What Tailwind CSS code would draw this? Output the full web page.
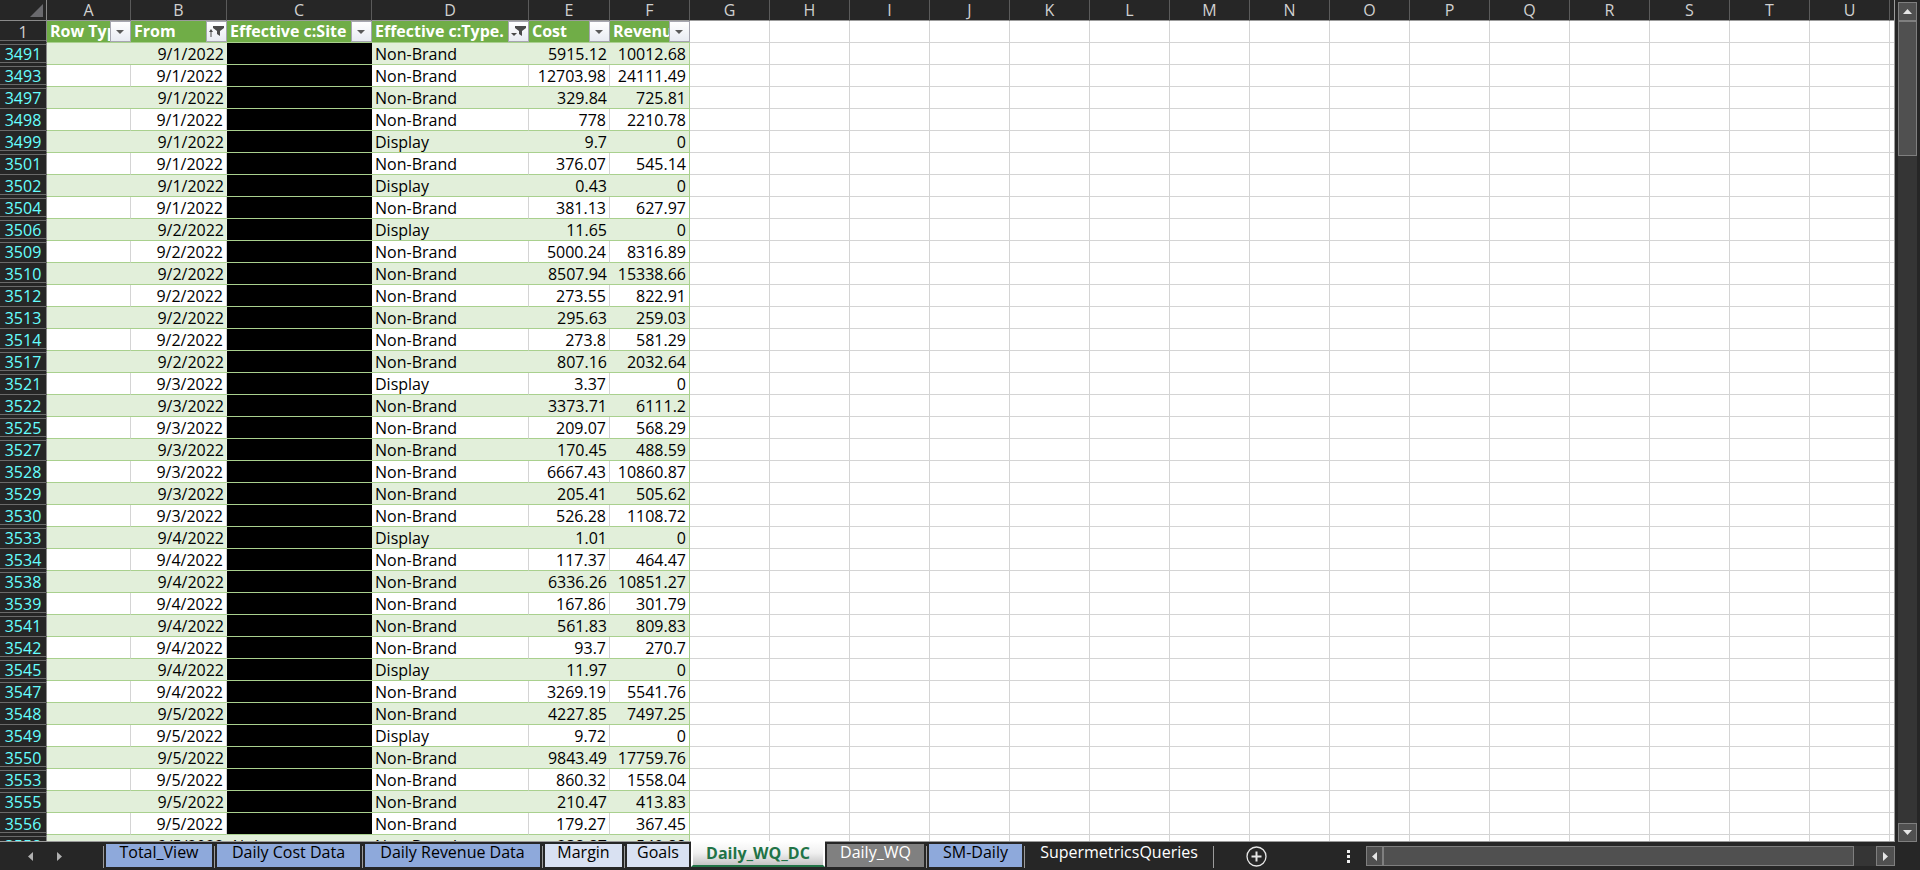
<!DOCTYPE html>
<html lang="en">
<head>
    <meta charset="UTF-8">
    <meta name="viewport" content="width=device-width, initial-scale=1.0">
    <title>Daily_WQ_DC</title>
    <script src="https://cdn.jsdelivr.net/npm/@tailwindcss/browser@4"></script>
</head>
<body class="h-screen flex flex-col overflow-hidden bg-[#262626] font-['Century_Gothic','Open_Sans',sans-serif] text-base">

    <!-- Sheet and vertical scrollbar -->
    <main class="flex-1 min-h-0 flex">
        <div class="flex-1 min-w-0 overflow-hidden bg-white border-r border-b border-[#9b9b9b]">
            <table class="w-full table-fixed border-separate border-spacing-0 leading-5">
                <colgroup id="cols">
                    <col class="w-[47px]">
                    <col class="w-[84px]">
                    <col class="w-24">
                    <col class="w-[145px]">
                    <col class="w-[157px]">
                    <col class="w-[81px]">
                    <col class="w-20">
                </colgroup>
                <thead>
                    <tr id="letters" class="h-[21px] bg-[#262626] text-[#d0d0d0]">
                        <th class="p-0 border-r border-b border-[#8a8a8a]" aria-label="Select all">
                            <svg class="ml-auto mr-[3px] size-[13px]" viewBox="0 0 13 13"><path d="M13 0V13H0Z" fill="#6a6a6e"/></svg>
                        </th>
                    </tr>
                </thead>
                <tbody id="rows"></tbody>
            </table>
        </div>

        <div class="w-[25px] flex flex-col pl-[3px] pr-[3px] pt-[2px]">
            <button aria-label="Scroll up" class="h-[19px] shrink-0 flex items-center justify-center bg-[#505050] border border-[#7f7f7f]">
                <svg class="w-[9px] h-[5px]" viewBox="0 0 9 5"><path d="M4.500 0L9 5H0Z" fill="#e6e6e6"/></svg>
            </button>
            <div class="flex-1 bg-[#353535]">
                <div class="h-[135px] bg-[#505050] border border-[#7f7f7f]"></div>
            </div>
            <button aria-label="Scroll down" class="h-[19px] shrink-0 flex items-center justify-center bg-[#505050] border border-[#7f7f7f]">
                <svg class="w-[9px] h-[5px]" viewBox="0 0 9 5"><path d="M0 0H9L4.500 5Z" fill="#e6e6e6"/></svg>
            </button>
        </div>
    </main>

    <!-- Sheet tabs -->
    <footer class="h-7 shrink-0 flex items-start font-['Segoe_UI','Open_Sans',sans-serif] leading-4">
        <div class="w-[103px] shrink-0 h-7 flex items-center pl-7 gap-6">
            <button aria-label="Previous sheet" class="h-[9px]"><svg class="w-[5px] h-[9px]" viewBox="0 0 5 9"><path d="M5 0V9L0 4.500Z" fill="#b0b0b0"/></svg></button>
            <button aria-label="Next sheet" class="h-[9px]"><svg class="w-[5px] h-[9px]" viewBox="0 0 5 9"><path d="M0 0V9L5 4.500Z" fill="#b0b0b0"/></svg></button>
        </div>
        <nav id="tabs" class="flex shrink-0 whitespace-nowrap">
            <div class="border-l border-[#9b9b9b] mt-1 h-[22px] pl-[2px]"><button class="-mt-[2px] block w-[106px] h-[23px] bg-[#8ea9db] text-black pb-[7px]">Total_View</button></div>
            <div class="border-l border-[#9b9b9b] mt-1 ml-[2px] h-[22px] pl-[2px]"><button class="-mt-[2px] block w-[143px] h-[23px] bg-[#8ea9db] text-black pb-[7px]">Daily Cost Data</button></div>
            <div class="border-l border-[#9b9b9b] mt-1 ml-[2px] h-[22px] pl-[2px]"><button class="-mt-[2px] block w-[175px] h-[23px] bg-[#8ea9db] text-black pb-[7px]">Daily Revenue Data</button></div>
            <div class="border-l border-[#9b9b9b] mt-1 ml-[2px] h-[22px] pl-[2px]"><button class="-mt-[2px] block w-[77px] h-[23px] bg-[#d9e1f2] text-black pb-[7px]">Margin</button></div>
            <div class="border-l border-[#9b9b9b] mt-1 ml-[2px] h-[22px] pl-[2px]"><button class="-mt-[2px] block w-[62px] h-[23px] bg-[#d9e1f2] text-black pb-[7px]">Goals</button></div>
            <button aria-current="page" class="-mt-px ml-[2px] w-[134px] h-[26px] px-[2px] bg-linear-to-b from-white via-[#f0f0f0] to-[#c4c4c4] border-x-2 border-white border-b-2 border-b-[#217346] font-bold text-[#217346]">Daily_WQ_DC</button>
            <div class="ml-[2px] mt-[2px]"><button class="block w-[97px] h-[23px] bg-[#808080] text-white pb-[7px]">Daily_WQ</button></div>
            <div class="border-l border-[#9b9b9b] mt-1 ml-[2px] h-[22px] pl-[2px]"><button class="-mt-[2px] block w-[93px] h-[23px] bg-[#8ea9db] text-black pb-[7px]">SM-Daily</button></div>
            <div class="border-x border-[#9b9b9b] mt-1 ml-[2px] h-[22px]"><button class="-mt-[2px] block w-[188px] h-[23px] text-white pb-[7px]">SupermetricsQueries</button></div>
        </nav>
        <button aria-label="New sheet" class="ml-8 mt-1 shrink-0">
            <svg class="size-[21px]" viewBox="0 0 21 21" fill="none" stroke="#e6e6e6"><circle cx="10.500" cy="10.500" r="9.500" stroke-width="1.300"/><path d="M10.500 5.500V15.500M5.500 10.500H15.500" stroke-width="2"/></svg>
        </button>
        <div class="flex-1"></div>
        <svg class="w-[3px] h-[13px] mt-2 mr-4 shrink-0" viewBox="0 0 3 13" fill="#f0f0f0"><path d="M0 0H3V3H0ZM0 5H3V8H0ZM0 10H3V13H0Z"/></svg>
        <div class="w-[529px] mr-[25px] mt-1 h-5 flex bg-[#353535]">
            <button aria-label="Scroll left" class="w-[17px] flex items-center justify-center bg-[#505050] border border-[#7f7f7f]">
                <svg class="w-[5px] h-[9px]" viewBox="0 0 5 9"><path d="M5 0V9L0 4.500Z" fill="#e6e6e6"/></svg>
            </button>
            <div class="flex-1 pr-[22px]"><div class="h-full bg-[#505050] border border-[#7f7f7f]"></div></div>
            <button aria-label="Scroll right" class="w-[19px] flex items-center justify-center bg-[#505050] border border-[#7f7f7f]">
                <svg class="w-[5px] h-[9px]" viewBox="0 0 5 9"><path d="M0 0V9L5 4.500Z" fill="#e6e6e6"/></svg>
            </button>
        </div>
    </footer>

    <script>
        // row number, date, type, cost, revenue
        const data = [
            [3491, '9/1/2022', 'Non-Brand', '5915.12', '10012.68'],
            [3493, '9/1/2022', 'Non-Brand', '12703.98', '24111.49'],
            [3497, '9/1/2022', 'Non-Brand', '329.84', '725.81'],
            [3498, '9/1/2022', 'Non-Brand', '778', '2210.78'],
            [3499, '9/1/2022', 'Display', '9.7', '0'],
            [3501, '9/1/2022', 'Non-Brand', '376.07', '545.14'],
            [3502, '9/1/2022', 'Display', '0.43', '0'],
            [3504, '9/1/2022', 'Non-Brand', '381.13', '627.97'],
            [3506, '9/2/2022', 'Display', '11.65', '0'],
            [3509, '9/2/2022', 'Non-Brand', '5000.24', '8316.89'],
            [3510, '9/2/2022', 'Non-Brand', '8507.94', '15338.66'],
            [3512, '9/2/2022', 'Non-Brand', '273.55', '822.91'],
            [3513, '9/2/2022', 'Non-Brand', '295.63', '259.03'],
            [3514, '9/2/2022', 'Non-Brand', '273.8', '581.29'],
            [3517, '9/2/2022', 'Non-Brand', '807.16', '2032.64'],
            [3521, '9/3/2022', 'Display', '3.37', '0'],
            [3522, '9/3/2022', 'Non-Brand', '3373.71', '6111.2'],
            [3525, '9/3/2022', 'Non-Brand', '209.07', '568.29'],
            [3527, '9/3/2022', 'Non-Brand', '170.45', '488.59'],
            [3528, '9/3/2022', 'Non-Brand', '6667.43', '10860.87'],
            [3529, '9/3/2022', 'Non-Brand', '205.41', '505.62'],
            [3530, '9/3/2022', 'Non-Brand', '526.28', '1108.72'],
            [3533, '9/4/2022', 'Display', '1.01', '0'],
            [3534, '9/4/2022', 'Non-Brand', '117.37', '464.47'],
            [3538, '9/4/2022', 'Non-Brand', '6336.26', '10851.27'],
            [3539, '9/4/2022', 'Non-Brand', '167.86', '301.79'],
            [3541, '9/4/2022', 'Non-Brand', '561.83', '809.83'],
            [3542, '9/4/2022', 'Non-Brand', '93.7', '270.7'],
            [3545, '9/4/2022', 'Display', '11.97', '0'],
            [3547, '9/4/2022', 'Non-Brand', '3269.19', '5541.76'],
            [3548, '9/5/2022', 'Non-Brand', '4227.85', '7497.25'],
            [3549, '9/5/2022', 'Display', '9.72', '0'],
            [3550, '9/5/2022', 'Non-Brand', '9843.49', '17759.76'],
            [3553, '9/5/2022', 'Non-Brand', '860.32', '1558.04'],
            [3555, '9/5/2022', 'Non-Brand', '210.47', '413.83'],
            [3556, '9/5/2022', 'Non-Brand', '179.27', '367.45'],
            [3558, '9/5/2022', 'Non-Brand', '238.87', '540.88', 'Alpha']
        ];
        const letters = 'ABCDEFGHIJKLMNOPQRSTU'.split('');

        // Filter button icons
        const icons = {
            arrow: '<svg class="size-[17px]" viewBox="0 0 17 17"><path d="M4 7H12L8 11Z" fill="#5a5a5a"/></svg>',
            sorted: '<svg class="size-[19px] shrink-0" viewBox="0 0 19 19" fill="#4a4a4a"><path d="M6 4H17V6L13 9V14L10 12V9L6 6Z"/><path d="M4 7L6 10H4.500V15H3.500V10H2Z"/></svg>',
            filtered: '<svg class="size-[19px] shrink-0" viewBox="0 0 19 19" fill="#4a4a4a"><path d="M6 4H17V6L13 9V14L10 12V9L6 6Z"/><path d="M2 11H8L5 14Z"/></svg>'
        };
        const headers = [
            ['Row Type', 'arrow'],
            ['From', 'sorted'],
            ['Effective c:Site', 'arrow'],
            ['Effective c:Type.', 'filtered'],
            ['Cost', 'arrow'],
            ['Revenue', 'arrow']
        ];

        // Column letters, the last column is a cut off sliver
        document.getElementById('letters').innerHTML += letters.map((l) =>
            `<th class="p-0 border-r border-b border-b-[#9b9b9b] border-r-[#5a5a5a] font-normal">${l}</th>`).join('')
            + '<th class="p-0 border-b border-[#9b9b9b]"></th>';
        document.getElementById('cols').innerHTML += '<col class="w-20">'.repeat(15) + '<col>';

        const emptyCells = '<td class="border-r border-b border-[#d4d4d4]"></td>'.repeat(15) + '<td class="border-b border-[#d4d4d4]"></td>';

        let html = `<tr class="h-[22px]">
            <th class="relative p-0 bg-[#262626] border-r border-r-[#8a8a8a] border-b border-b-[#262626] font-normal text-[#d0d0d0]">1<i class="absolute inset-x-0 bottom-px h-px bg-[#6a6a6a]"></i></th>
            ${headers.map(([name, icon]) => `<th class="p-0 bg-[#70ad47] border-b border-[#a9d08e] text-white text-left">
                <div class="flex h-[21px]">
                    <span class="flex-1 min-w-0 overflow-hidden whitespace-nowrap pl-[3px]">${name}</span>
                    <button aria-label="Filter ${name}" class="w-[21px] shrink-0 flex items-center justify-center bg-linear-to-b from-white to-[#e8ebf2] border border-[#a6a6b0]">${icons[icon]}</button>
                </div>
            </th>`).join('')}
            ${emptyCells}
        </tr>`;

        let prev = 1;
        data.forEach(([num, date, type, cost, revenue, site], i) => {
            const next = data[i + 1] ? data[i + 1][0] : num + 1;
            // hidden rows leave a double line between the row numbers
            const top = num - prev > 1 ? '<i class="absolute inset-x-0 top-px h-px bg-[#6a6a6a]"></i>' : '';
            const bottom = next - num > 1
                ? '<i class="absolute inset-x-0 bottom-px h-px bg-[#6a6a6a]"></i>'
                : '<i class="absolute inset-x-0 -bottom-px h-px bg-[#6a6a6a]"></i>';
            const band = i % 2 === 0;
            const cell = band
                ? 'p-0 px-[3px] border-b border-[#a9d08e] bg-[#e2efda]'
                : 'p-0 px-[3px] border-b border-r border-b-[#a9d08e] border-r-[#d4d4d4]';
            const last = band
                ? 'p-0 px-[3px] border-b border-r border-[#a9d08e] bg-[#e2efda]'
                : 'p-0 px-[3px] border-b border-r border-[#a9d08e]';
            html += `<tr class="h-[22px]">
                <th class="relative p-0 bg-[#262626] border-r border-r-[#8a8a8a] border-b border-b-[#262626] font-normal text-[#66ffff]">${top}${num}${bottom}</th>
                <td class="${cell}"></td>
                <td class="${cell} text-right">${date}</td>
                <td class="${site ? cell : 'border-b border-[#a9d08e] bg-black'}">${site || ''}</td>
                <td class="${cell}">${type}</td>
                <td class="${cell} text-right">${cost}</td>
                <td class="${last} text-right">${revenue}</td>
                ${emptyCells}
            </tr>`;
            prev = num;
        });
        document.getElementById('rows').innerHTML = html;
    </script>
</body>
</html>
